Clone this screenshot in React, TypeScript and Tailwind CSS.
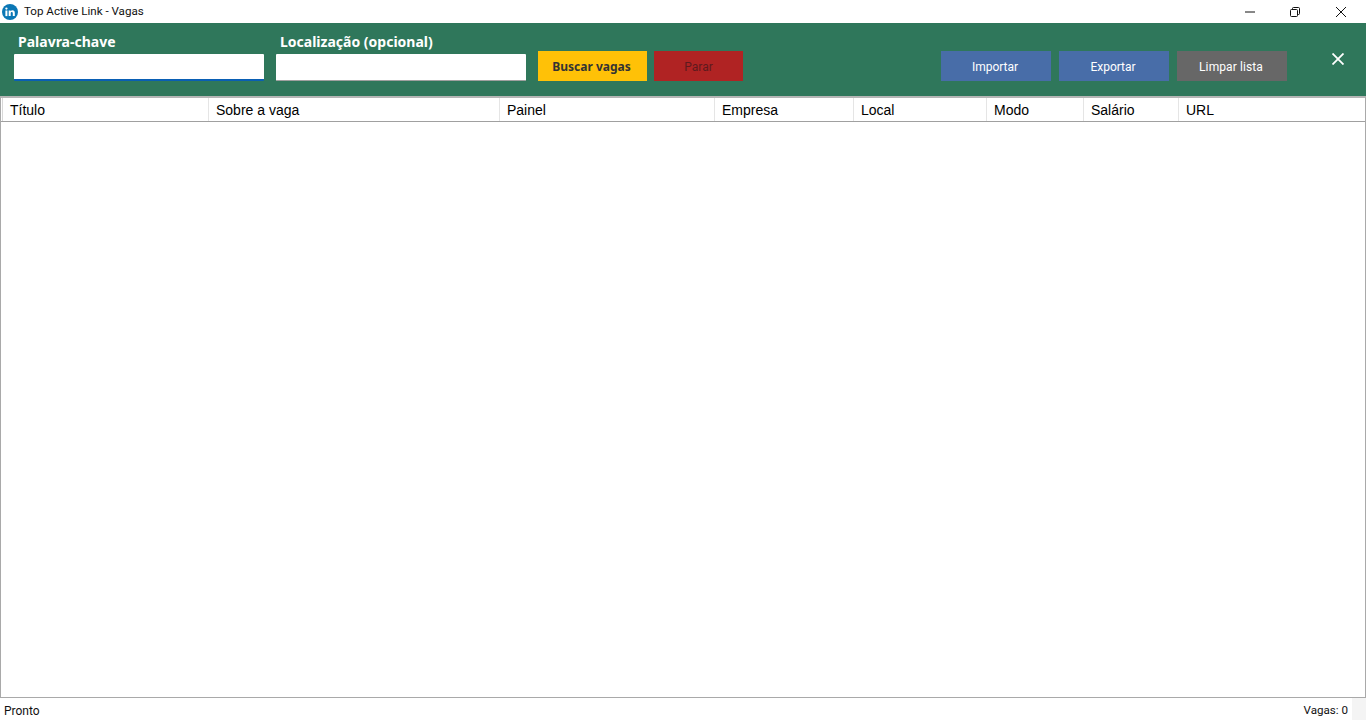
import React from "react";

const columns = [
  { label: "Título", width: "w-[206px]" },
  { label: "Sobre a vaga", width: "w-[291px]" },
  { label: "Painel", width: "w-[215px]" },
  { label: "Empresa", width: "w-[139px]" },
  { label: "Local", width: "w-[133px]" },
  { label: "Modo", width: "w-[97px]" },
  { label: "Salário", width: "w-[95px]" },
];

const LinkedInLogo = () => (
  <svg width="16" height="16" viewBox="0 0 16 16">
    <circle cx="8" cy="8" r="8" fill="#0a77b5" />
    <rect x="3.4" y="6.5" width="2" height="5.6" fill="#fff" />
    <circle cx="4.4" cy="4.6" r="1.15" fill="#fff" />
    <path d="M6.7 6.5h1.9v.8c.4-.6 1.1-1 1.9-1 1.6 0 2.3 1 2.3 2.7v3.1h-2V9.3c0-.8-.3-1.2-.9-1.2-.7 0-1.2.5-1.2 1.3v2.7h-2z" fill="#fff" />
  </svg>
);

const WindowControls = () => (
  <div className="flex items-center">
    <div className="flex h-[23px] w-[44px] items-center justify-center">
      <svg width="10" height="10" viewBox="0 0 10 10">
        <path d="M0 5h10" stroke="#111" strokeWidth="1" />
      </svg>
    </div>
    <div className="flex h-[23px] w-[46px] items-center justify-center">
      <svg width="10" height="10" viewBox="0 0 10 10" fill="none" stroke="#111">
        <rect x="0.5" y="2.5" width="7" height="7" rx="1" />
        <path d="M2.5 2.5V1.5a1 1 0 0 1 1-1h5a1 1 0 0 1 1 1v5a1 1 0 0 1-1 1h-1" />
      </svg>
    </div>
    <div className="flex h-[23px] w-[46px] items-center justify-center">
      <svg width="10" height="10" viewBox="0 0 10 10">
        <path d="M0 0l10 10M10 0l-10 10" stroke="#111" strokeWidth="1" />
      </svg>
    </div>
  </div>
);

const Field = ({ label, focused }: { label: string; focused?: boolean }) => (
  <div className="flex flex-col">
    <label className="mb-[2px] pl-1 text-[14px] leading-[20px] font-bold text-white">{label}</label>
    <input
      className={`h-[27px] w-[250px] rounded-[1px] bg-white outline-none ${
        focused ? "border-b-2 border-[#0a5fb4]" : "border-b border-[#a0a0a0]"
      }`}
    />
  </div>
);

export default function App() {
  return (
    <div className="flex h-[720px] w-[1366px] flex-col overflow-hidden bg-white font-['Noto_Sans',sans-serif]">
      {/* title bar */}
      <div className="flex h-[23px] items-center justify-between px-[2px]">
        <div className="flex items-center gap-[6px]">
          <LinkedInLogo />
          <span className="font-['Roboto',sans-serif] text-[11.6px] leading-none text-[#111]">Top Active Link - Vagas</span>
        </div>
        <WindowControls />
      </div>

      {/* toolbar */}
      <div className="flex h-[73px] items-end bg-[#2f775b] pb-[15px] pl-[14px] pr-[22px]">
        <div className="flex items-end gap-3">
          <Field label="Palavra-chave" focused />
          <Field label="Localização (opcional)" />
        </div>
        <button className="ml-3 h-[30px] w-[109px] bg-[#ffc107] pt-[2px] pr-[2px] text-[12px] font-bold text-[#333]">Buscar vagas</button>
        <button className="ml-[7px] h-[30px] w-[89px] bg-[#b02323] pt-[2px] font-['Roboto',sans-serif] text-[12px] text-[#5e1a1e]">Parar</button>
        <div className="ml-auto flex items-end gap-2 font-['Roboto',sans-serif] text-[12px] text-white">
          <button className="h-[30px] w-[110px] bg-[#486da8] pt-[2px] pr-[2px]">Importar</button>
          <button className="h-[30px] w-[110px] bg-[#486da8] pt-[2px] pr-[2px]">Exportar</button>
          <button className="h-[30px] w-[110px] bg-[#676767] pt-[2px] pr-[2px] tracking-[0.1px]">Limpar lista</button>
        </div>
        <div className="ml-[45px] mb-[15px] flex h-[15px] w-[12px] items-center">
          <svg width="12" height="12" viewBox="0 0 12 12">
            <path d="M0.5 0.5l11 11M11.5 0.5l-11 11" stroke="#fff" strokeWidth="1.8" />
          </svg>
        </div>
      </div>

      {/* table */}
      <div className="flex flex-1 flex-col border border-t-2 border-[#a9a9a9] border-t-[#b5b5b5] bg-white">
        <div className="flex h-[24px] border-b border-[#a0a0a0] pl-px font-['Liberation_Sans',sans-serif] text-[14px] text-black">
          <div className="w-px bg-[#d8d8d8]" />
          {columns.map((col) => (
            <div key={col.label} className={`${col.width} flex items-center border-r border-[#e5e5e5] pl-[7px] pt-[2px]`}>
              {col.label}
            </div>
          ))}
          <div className="flex flex-1 items-center pl-[7px] pt-[2px]">URL</div>
        </div>
      </div>

      {/* status bar */}
      <div className="flex h-[22px] items-stretch bg-[#f4f4f4] font-['Roboto',sans-serif] text-[#111]">
        <span className="flex flex-1 items-center bg-white pl-1 pt-[3px] text-[12px]">Pronto</span>
        <span className="flex items-center bg-white pl-[2px] pr-[4px] pt-[3px] text-[11.6px]">Vagas: 0</span>
        <div className="w-[14px]" />
      </div>
    </div>
  );
}
